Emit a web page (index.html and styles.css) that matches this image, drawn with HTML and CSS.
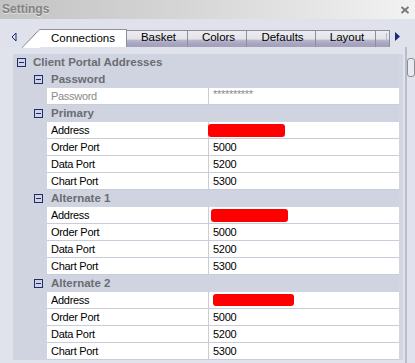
FILE: index.html
```html
<!DOCTYPE html>
<html>
<head>
<meta charset="utf-8">
<link rel="stylesheet" href="styles.css">
</head>
<body>
<div class="titlebar">
  <span class="title">Settings</span>
  <svg class="close" width="10" height="8" viewBox="0 0 10 8"><path d="M1.5 1 L8.5 7 M8.5 1 L1.5 7" stroke="#767676" stroke-width="1.8" fill="none"/></svg>
</div>
<div class="tabstrip">
  <div class="nav-left"><svg width="6" height="10" viewBox="0 0 6 10"><polygon points="5,1 1,5 5,9" fill="none" stroke="#1c2a78" stroke-width="1"/></svg></div>
  <div class="tab-active">Connections</div>
  <div class="tab w-basket">Basket</div>
  <div class="tab w-colors">Colors</div>
  <div class="tab w-defaults">Defaults</div>
  <div class="tab w-layout">Layout</div>
  <div class="tab w-part"><span class="cursor"></span></div>
  <div class="nav-right"><svg width="5" height="9" viewBox="0 0 5 9"><polygon points="0,0 5,4.5 0,9" fill="#1c2a78"/></svg></div>
</div>
<div class="page">
  <div class="panel">
    <div class="row cat"><svg class="ico" width="9" height="9" viewBox="0 0 9 9"><rect x="0.5" y="0.5" width="8" height="8" fill="none" stroke="#1f2d6e"/><path d="M2 4.5 H7" stroke="#1f2d6e"/></svg><span class="hdr">Client Portal Addresses</span></div>

    <div class="row sub"><svg class="ico" width="9" height="9" viewBox="0 0 9 9"><rect x="0.5" y="0.5" width="8" height="8" fill="none" stroke="#1f2d6e"/><path d="M2 4.5 H7" stroke="#1f2d6e"/></svg><span class="hdr">Password</span></div>
    <div class="row prop"><div class="name muted">Password</div><div class="val muted stars">**********</div></div>

    <div class="row sub"><svg class="ico" width="9" height="9" viewBox="0 0 9 9"><rect x="0.5" y="0.5" width="8" height="8" fill="none" stroke="#1f2d6e"/><path d="M2 4.5 H7" stroke="#1f2d6e"/></svg><span class="hdr">Primary</span></div>
    <div class="row prop"><div class="name">Address</div><div class="val"><span class="redact r1"></span></div></div>
    <div class="row prop"><div class="name">Order Port</div><div class="val">5000</div></div>
    <div class="row prop"><div class="name">Data Port</div><div class="val">5200</div></div>
    <div class="row prop"><div class="name">Chart Port</div><div class="val">5300</div></div>

    <div class="row sub"><svg class="ico" width="9" height="9" viewBox="0 0 9 9"><rect x="0.5" y="0.5" width="8" height="8" fill="none" stroke="#1f2d6e"/><path d="M2 4.5 H7" stroke="#1f2d6e"/></svg><span class="hdr">Alternate 1</span></div>
    <div class="row prop"><div class="name">Address</div><div class="val"><span class="redact r2"></span></div></div>
    <div class="row prop"><div class="name">Order Port</div><div class="val">5000</div></div>
    <div class="row prop"><div class="name">Data Port</div><div class="val">5200</div></div>
    <div class="row prop"><div class="name">Chart Port</div><div class="val">5300</div></div>

    <div class="row sub"><svg class="ico" width="9" height="9" viewBox="0 0 9 9"><rect x="0.5" y="0.5" width="8" height="8" fill="none" stroke="#1f2d6e"/><path d="M2 4.5 H7" stroke="#1f2d6e"/></svg><span class="hdr">Alternate 2</span></div>
    <div class="row prop"><div class="name">Address</div><div class="val"><span class="redact r3"></span></div></div>
    <div class="row prop"><div class="name">Order Port</div><div class="val">5000</div></div>
    <div class="row prop"><div class="name">Data Port</div><div class="val">5200</div></div>
    <div class="row prop"><div class="name">Chart Port</div><div class="val">5300</div></div>
  </div>
  <div class="rside">
    <div class="rline"></div>
    <div class="redge"><div class="thumb"></div></div>
  </div>
</div>
</body>
</html>
```
FILE: styles.css
```css
html, body {
  margin: 0;
  padding: 0;
}
body {
  width: 415px;
  height: 363px;
  overflow: hidden;
  background: #e0e3ec;
  font-family: "Liberation Sans", Arial, sans-serif;
  color: #000;
}

/* title bar */
.titlebar {
  height: 19px;
  display: flex;
  align-items: center;
  justify-content: space-between;
  padding: 0 5px 0 2px;
  background: linear-gradient(to right, #c3c3c3 0%, #d6d6d6 45%, #f2f2f2 100%);
}
.title {
  font-size: 12px;
  font-weight: bold;
  line-height: 19px;
  color: #838383;
  text-shadow: 0 1px 0 rgba(255, 255, 255, 0.5);
}
.close {
  display: block;
}

/* tabs */
.tabstrip {
  height: 28px;
  display: flex;
  align-items: flex-end;
  background: #dfe2ea;
}
.nav-left {
  align-self: stretch;
  width: 22px;
  box-sizing: border-box;
  padding: 13px 0 0 11px;
}
.nav-left svg, .nav-right svg {
  display: block;
}
.tab-active {
  position: relative;
  width: 87px;
  height: 18px;
  margin-left: 18px;
  box-sizing: border-box;
  background: #fff;
  border-top: 1px solid #8e8e9b;
  border-right: 1px solid #8e8e9b;
  font-size: 11.5px;
  line-height: 16px;
  text-align: center;
}
.tab-active::before {
  content: "";
  position: absolute;
  left: -18px;
  top: -1px;
  width: 18px;
  height: 19px;
  background: linear-gradient(to bottom right, transparent calc(50% - 0.8px), #8e8e9b calc(50% - 0.2px), #fff calc(50% + 0.8px));
}
.tab {
  height: 17px;
  box-sizing: border-box;
  border-top: 1px solid #8e8e9b;
  border-right: 1px solid #8e8e9b;
  background: linear-gradient(to bottom, #ececf1 0%, #e3e3ea 50%, #b9b7cd 58%, #a7a4bf 80%, #a3a0bb 100%);
  font-size: 11.5px;
  line-height: 13px;
  text-align: center;
  padding-left: 3px;
}
.w-basket { width: 61px; }
.w-colors { width: 59px; }
.w-defaults { width: 69px; }
.w-layout { width: 60px; }
.w-part {
  width: 14px;
  padding: 2px 0 0 10px;
}
.cursor {
  display: block;
  width: 1px;
  height: 9px;
  background: #a9b8da;
}
.nav-right {
  align-self: stretch;
  box-sizing: border-box;
  padding: 13px 0 0 5px;
}

/* page */
.page {
  display: flex;
  height: 316px;
  box-sizing: border-box;
  padding: 7px 0 0 13px;
  background: #e0e3ec;
}
.panel {
  width: 390px;
  padding-right: 4px;
  background: #d2d6e1;
  align-self: flex-start;
}
.rside {
  display: flex;
  flex: 1;
  margin-top: -7px;
  padding-left: 2px;
}
.rline {
  width: 2px;
  background: #b9bdcb;
}
.redge {
  flex: 1;
  padding-top: 11px;
  overflow: hidden;
}
.thumb {
  width: 8px;
  height: 19px;
  box-sizing: border-box;
  border: 1px solid #8c8c94;
  border-radius: 3px;
  background: #e9eaef;
}

/* rows */
.row {
  height: 17px;
  display: flex;
  align-items: center;
  background: #cfd4e0;
}
.ico {
  display: block;
  flex: none;
}
.cat {
  padding-left: 4px;
}
.cat .ico {
  margin-right: 7px;
}
.sub {
  padding-left: 21px;
}
.sub .ico {
  margin-right: 8px;
}
.hdr {
  font-size: 11.5px;
  font-weight: bold;
  line-height: 17px;
  color: #6c6c72;
  white-space: nowrap;
}
.prop {
  align-items: stretch;
  padding-left: 34px;
}
.name, .val {
  box-sizing: border-box;
  height: 17px;
  background: #fff;
  border-bottom: 1px solid #c9cdd9;
  font-size: 11px;
  line-height: 16px;
  letter-spacing: -0.3px;
  padding-left: 4px;
  white-space: nowrap;
}
.name {
  width: 162px;
  border-right: 1px solid #c9cdd9;
}
.val {
  flex: 1;
  display: flex;
  align-items: center;
}
.muted {
  color: #8a8a8a;
}
.stars {
  align-items: flex-start;
  font-size: 11px;
  line-height: 13px;
  letter-spacing: -0.3px;
}
.redact {
  display: block;
  height: 13px;
  background: #ff0000;
  border-radius: 3px;
}
.r1 { width: 77px; margin-left: -5px; }
.r2 { width: 77px; margin-left: -2px; }
.r3 { width: 81px; height: 12px; margin-left: 0; }
```
